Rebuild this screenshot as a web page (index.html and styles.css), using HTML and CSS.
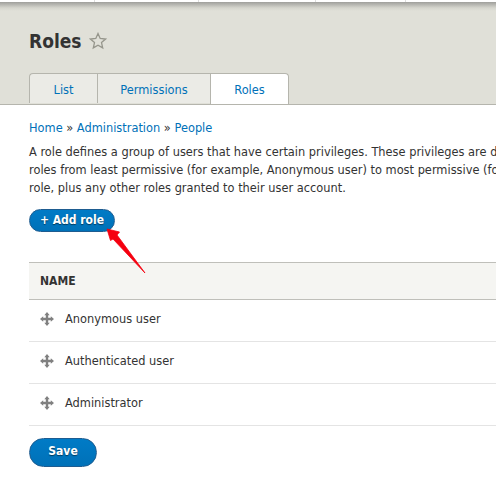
FILE: index.html
```html
<!DOCTYPE html>
<html lang="en">
<head>
  <meta charset="UTF-8">
  <title>Roles</title>
  <link rel="stylesheet" href="styles.css">
</head>
<body>

  <!-- toolbar left over at the top -->
  <div class="toolbar">
    <span class="toolbar-item item-1"></span>
    <span class="toolbar-item item-2"></span>
    <span class="toolbar-item item-3"></span>
    <span class="toolbar-item item-4"></span>
  </div>

  <header class="page-head">
    <h1 class="page-title">Roles
      <svg class="star" width="18" height="18" viewBox="0 0 18 18">
        <path d="M9 1.500l2.200 5 5.300.6-4 3.500 1.200 5.300L9 13.200l-4.700 2.700 1.200-5.300-4-3.500 5.300-.6z" fill="none" stroke="#96968c" stroke-width="1.300"/>
      </svg>
    </h1>
    <ul class="tabs">
      <li class="tab tab-list"><a href="#">List</a></li>
      <li class="tab tab-perms"><a href="#">Permissions</a></li>
      <li class="tab tab-roles active"><a href="#">Roles</a></li>
    </ul>
  </header>

  <main class="content">
    <div class="breadcrumb"><a href="#">Home</a> » <a href="#">Administration</a> » <a href="#">People</a></div>

    <div class="help">
      <p>A role defines a group of users that have certain privileges. These privileges are de</p>
      <p>roles from least permissive (for example, Anonymous user) to most permissive (fo</p>
      <p>role, plus any other roles granted to their user account.</p>
    </div>

    <div class="add-wrap">
      <a class="button add-button" href="#">+ Add role</a>
      <!-- red annotation arrow -->
      <svg class="arrow" width="44" height="50" viewBox="0 0 44 50">
        <path d="M1 1L13.500 4 11 7 39 45 7 11 4.500 12.500z" fill="#f5000f" stroke="#f5000f" stroke-width="0.800" stroke-linejoin="round"/>
      </svg>
    </div>

    <table class="roles-table">
      <thead>
        <tr><th>Name</th></tr>
      </thead>
      <tbody>
        <tr><td><svg class="handle" width="14" height="14" viewBox="0 0 14 14"><path d="M7 0l2.700 3.200H8.200v2.600h2.600V4.300L14 7l-3.200 2.700V8.200H8.200v2.600h1.500L7 14l-2.700-3.200h1.500V8.200H3.200v1.500L0 7l3.200-2.700v1.500h2.600V3.200H4.300z" fill="#808080"/></svg>Anonymous user</td></tr>
        <tr><td><svg class="handle" width="14" height="14" viewBox="0 0 14 14"><path d="M7 0l2.700 3.200H8.200v2.600h2.600V4.300L14 7l-3.200 2.700V8.200H8.200v2.600h1.500L7 14l-2.700-3.200h1.500V8.200H3.200v1.500L0 7l3.200-2.700v1.500h2.600V3.200H4.300z" fill="#808080"/></svg>Authenticated user</td></tr>
        <tr><td><svg class="handle" width="14" height="14" viewBox="0 0 14 14"><path d="M7 0l2.700 3.200H8.200v2.600h2.600V4.300L14 7l-3.200 2.700V8.200H8.200v2.600h1.500L7 14l-2.700-3.200h1.500V8.200H3.200v1.500L0 7l3.200-2.700v1.500h2.600V3.200H4.300z" fill="#808080"/></svg>Administrator</td></tr>
      </tbody>
    </table>

    <a class="button save-button" href="#">Save</a>
  </main>

</body>
</html>
```

FILE: styles.css
```css
html, body {
  overflow: hidden;
}

body {
  margin: 0;
  width: 496px;
  height: 490px;
  font-family: "DejaVu Sans", sans-serif;
  font-size: 11.4px;
  color: #333;
  background-color: #fff;
}

a {
  color: #0071b8;
  text-decoration: none;
}

.toolbar {
  display: flex;
  height: 2px;
  background-color: #fff;
}

.toolbar-item {
  border-right: 1px solid #ddd;
}

.item-1 {
  width: 94px;
}

.item-2 {
  width: 103px;
}

.item-3 {
  width: 116px;
}

.item-4 {
  width: 89px;
}

.page-head {
  box-sizing: border-box;
  height: 103px;
  padding-left: 29px;
  background: linear-gradient(#9f9f9b, #d6d6ce 6px, #e0e0d8 9px);
  border-bottom: 1px solid #b5b5ad;
  display: flex;
  flex-direction: column;
}

.page-title {
  margin: 0;
  padding-top: 6px;
  height: 66px;
  font-family: "DejaVu Sans Condensed", "DejaVu Sans", sans-serif;
  font-stretch: condensed;
  font-size: 19px;
  line-height: 26px;
  font-weight: bold;
  color: #333;
  display: flex;
  align-items: center;
  gap: 7px;
}

.tabs {
  list-style: none;
  margin: 0;
  padding: 0;
  display: flex;
}

.tab {
  height: 29px;
  background-color: #ebebe6;
  border: 1px solid #b5b5ad;
  border-bottom: 0;
  text-align: center;
  line-height: 32px;
}

.tab-list {
  width: 67px;
  border-right: 0;
  border-radius: 4px 0 0 0;
}

.tab-perms {
  width: 112px;
  border-right: 0;
}

.tab-roles {
  width: 77px;
  border-radius: 0 4px 0 0;
}

.tab.active {
  background-color: #fff;
  height: 30px;
}

.content {
  padding: 16px 0 0 29px;
}

.breadcrumb {
  line-height: 14px;
  margin-bottom: 8px;
}

.help {
  white-space: nowrap;
  line-height: 18px;
  color: #333;
}

.help p {
  margin: 0;
}

.add-wrap {
  position: relative;
  margin-top: 12px;
  height: 23px;
}

.button {
  display: inline-block;
  box-sizing: border-box;
  color: #fff;
  font-family: "DejaVu Sans Condensed", "DejaVu Sans", sans-serif;
  font-stretch: condensed;
  font-size: 12px;
  font-weight: bold;
  text-align: center;
  text-shadow: 0 1px 1px rgba(0, 0, 0, 0.5);
  background: linear-gradient(#007bc6, #0071b8);
  border: 1px solid #1e5c90;
  border-radius: 20px;
}

.add-button {
  width: 86px;
  height: 23px;
  line-height: 20px;
}

.arrow {
  position: absolute;
  left: 77px;
  top: 19px;
}

.roles-table {
  width: 467px;
  margin-top: 30px;
  border-collapse: collapse;
}

.roles-table th {
  height: 36px;
  padding: 0 0 0 11px;
  text-align: left;
  font-family: "DejaVu Sans Condensed", "DejaVu Sans", sans-serif;
  font-stretch: condensed;
  font-size: 12px;
  text-transform: uppercase;
  background-color: #f5f5f2;
  border-top: 1px solid #bfbfba;
  border-bottom: 1px solid #bfbfba;
}

.roles-table td {
  height: 42px;
  padding: 0 0 3px 11px;
  box-sizing: border-box;
  border-bottom: 1px solid #e4e4e4;
}

.handle {
  margin-right: 11px;
  vertical-align: -3px;
}

.save-button {
  display: block;
  width: 68px;
  height: 29px;
  line-height: 25px;
  margin-top: 12px;
}
```
